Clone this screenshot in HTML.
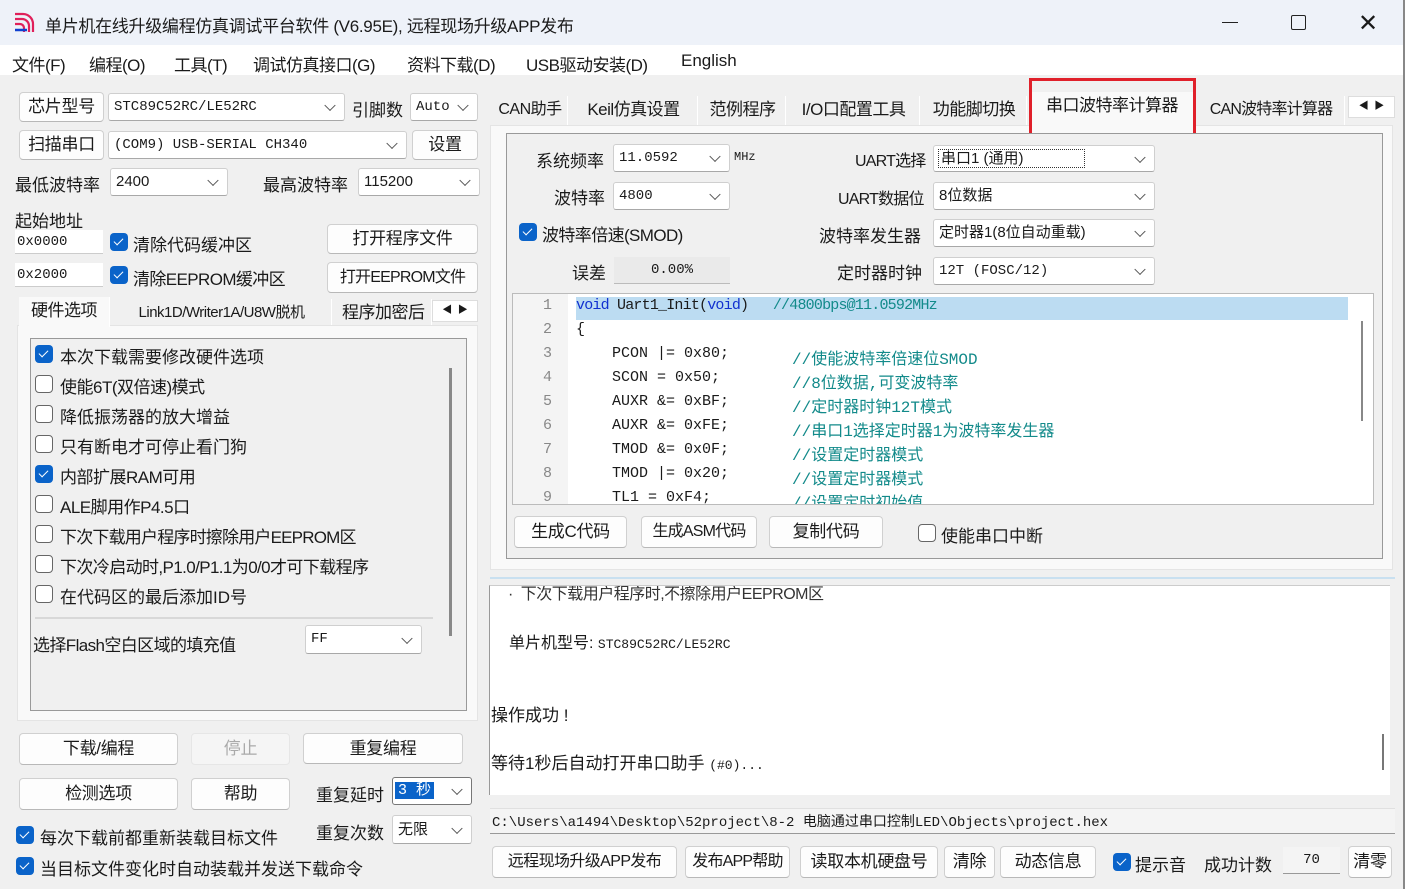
<!DOCTYPE html><html><head><meta charset="utf-8"><style>
*{box-sizing:border-box;margin:0;padding:0}
body{width:1405px;height:889px;overflow:hidden;background:#f0f0f0;font-family:"Liberation Sans","Noto Sans CJK SC",sans-serif;font-size:17px;color:#1a1a1a;position:relative}
.a{position:absolute;white-space:nowrap}
.btn{position:absolute;background:#fdfdfd;border:1px solid #d0d0d0;border-bottom-color:#b8b8b8;border-radius:4px;text-align:center;font-size:17px;white-space:nowrap;overflow:hidden;letter-spacing:-0.3px}
.cb{position:absolute;background:#fff;border:1px solid #cfcfcf;border-bottom-color:#a8a8a8;border-radius:3px;font-size:15px;padding-left:5px;font-family:"Liberation Mono","Noto Sans CJK SC",monospace;white-space:nowrap}
.cb:after{content:"";position:absolute;right:10px;top:50%;width:7px;height:7px;border-right:1.3px solid #555;border-bottom:1.3px solid #555;transform:translateY(-70%) rotate(45deg)}
.ck{position:absolute;width:18px;height:18px;border-radius:4px;background:#0a63c9}
.ck:after{content:"";position:absolute;left:6px;top:3px;width:4px;height:8px;border-right:1.5px solid #fff;border-bottom:1.5px solid #fff;transform:rotate(45deg)}
.uk{position:absolute;width:18px;height:18px;border-radius:4px;border:1.3px solid #666;background:#fff}
.tab{position:absolute;font-size:17px;text-align:center;background:#f0f0f0;border-right:1px solid #fff;white-space:nowrap;overflow:hidden;letter-spacing:-0.5px}
.mono{font-family:"Liberation Mono","Noto Sans CJK SC",monospace}
.code div{position:absolute;left:0;height:24px;font-size:15px;font-family:"Liberation Mono","Noto Sans CJK SC",monospace;white-space:nowrap}
.cm{color:#128a8a;font-size:16px!important}
.kw{color:#1030d0}
</style></head><body>
<div class="a" style="left:0;top:0;width:1405px;height:45px;background:#eef2f9"></div>
<svg class="a" style="left:13px;top:11px" width="24" height="24" viewBox="0 0 24 24"><g fill="none" stroke="#e0205a" stroke-width="2.2"><path d="M2 3h8a10 10 0 0 1 10 10v8"/><path d="M2 8h7a7 7 0 0 1 7 7v6"/><path d="M2 13h5a4 4 0 0 1 4 4v4"/></g><path d="M2 19h12" stroke="#1040d0" stroke-width="2.5"/></svg>
<div class="a" style="left:45px;top:12px;font-size:17px;letter-spacing:-0.3px">单片机在线升级编程仿真调试平台软件 (V6.95E), 远程现场升级APP发布</div>
<div class="a" style="left:1222px;top:22px;width:16px;height:1px;background:#222"></div>
<div class="a" style="left:1291px;top:15px;width:15px;height:15px;border:1.3px solid #222;border-radius:2px"></div>
<div class="a" style="left:1358px;top:9px;font-size:24px;font-weight:300">✕</div>
<div class="a" style="left:0;top:45px;width:1405px;height:30px;background:#fff"></div>
<div class="a" style="left:12px;top:51px;font-size:17px;letter-spacing:-0.5px">文件(F)</div>
<div class="a" style="left:89px;top:51px;font-size:17px;letter-spacing:-0.5px">编程(O)</div>
<div class="a" style="left:174px;top:51px;font-size:17px;letter-spacing:-0.5px">工具(T)</div>
<div class="a" style="left:253px;top:51px;font-size:17px;letter-spacing:-0.5px">调试仿真接口(G)</div>
<div class="a" style="left:407px;top:51px;font-size:17px;letter-spacing:-0.5px">资料下载(D)</div>
<div class="a" style="left:526px;top:51px;font-size:17px;letter-spacing:-0.5px">USB驱动安装(D)</div>
<div class="a" style="left:681px;top:51px;font-size:17px">English</div>

<div class="btn" style="left:19px;top:92px;width:85px;height:30px;line-height:28px">芯片型号</div>
<div class="cb" style="left:108px;top:93px;width:237px;height:28px;line-height:26px;font-size:14px">STC89C52RC/LE52RC</div>
<div class="a" style="left:352px;top:96px;font-size:17px">引脚数</div>
<div class="cb" style="left:410px;top:93px;width:68px;height:28px;line-height:26px;font-size:14px">Auto</div>
<div class="btn" style="left:19px;top:130px;width:85px;height:30px;line-height:28px">扫描串口</div>
<div class="cb" style="left:108px;top:131px;width:299px;height:28px;line-height:26px;font-size:14px">(COM9) USB-SERIAL CH340</div>
<div class="btn" style="left:412px;top:130px;width:66px;height:30px;line-height:28px">设置</div>
<div class="a" style="left:15px;top:171px;font-size:17px">最低波特率</div>
<div class="cb" style="left:110px;top:168px;width:118px;height:28px;line-height:26px;font-family:'Liberation Sans'">2400</div>
<div class="a" style="left:263px;top:171px;font-size:17px">最高波特率</div>
<div class="cb" style="left:358px;top:168px;width:122px;height:28px;line-height:26px;font-family:'Liberation Sans'">115200</div>
<div class="a" style="left:15px;top:207px;font-size:17px">起始地址</div>
<div class="a mono" style="left:15px;top:230px;width:88px;height:24px;background:#fff;border-bottom:1px solid #ccc;font-size:14px;line-height:24px;padding-left:2px">0x0000</div>
<div class="ck" style="left:110px;top:233px"></div>
<div class="a" style="left:133px;top:231px;font-size:17px">清除代码缓冲区</div>
<div class="btn" style="left:327px;top:224px;width:151px;height:30px;line-height:28px">打开程序文件</div>
<div class="a mono" style="left:15px;top:263px;width:88px;height:24px;background:#fff;border-bottom:1px solid #ccc;font-size:14px;line-height:24px;padding-left:2px">0x2000</div>
<div class="ck" style="left:110px;top:266px"></div>
<div class="a" style="left:133px;top:265px;font-size:17px;letter-spacing:-0.6px">清除EEPROM缓冲区</div>
<div class="btn" style="left:327px;top:262px;width:151px;height:31px;line-height:29px;font-size:16px;letter-spacing:-0.8px">打开EEPROM文件</div>
<div class="a" style="left:17px;top:325px;width:461px;height:396px;background:#f9f9f9;border:1px solid #e4e4e4"></div>
<div class="tab" style="left:19px;top:297px;width:91px;height:30px;line-height:28px;background:#f9f9f9">硬件选项</div>
<div class="tab" style="left:112px;top:299px;width:220px;height:26px;line-height:28px;font-size:15px">Link1D/Writer1A/U8W脱机</div>
<div class="tab" style="left:334px;top:299px;width:98px;height:26px;line-height:28px;text-align:left;padding-left:8px">程序加密后</div>
<div class="a" style="left:432px;top:300px;width:46px;height:22px;background:#fff;border:1px solid #ddd;font-size:10px;line-height:20px;text-align:center">◀ &nbsp;▶</div>
<div class="a" style="left:30px;top:338px;width:437px;height:373px;border:1.5px solid #999;background:#f0f0f0"></div>
<div class="a" style="left:449px;top:368px;width:3px;height:268px;background:#888"></div>
<div class="ck" style="left:35px;top:345px"></div><div class="a" style="left:60px;top:343px;font-size:17px">本次下载需要修改硬件选项</div>
<div class="uk" style="left:35px;top:375px"></div><div class="a" style="left:60px;top:373px;font-size:17px;letter-spacing:-0.5px">使能6T(双倍速)模式</div>
<div class="uk" style="left:35px;top:405px"></div><div class="a" style="left:60px;top:403px;font-size:17px">降低振荡器的放大增益</div>
<div class="uk" style="left:35px;top:435px"></div><div class="a" style="left:60px;top:433px;font-size:17px">只有断电才可停止看门狗</div>
<div class="ck" style="left:35px;top:465px"></div><div class="a" style="left:60px;top:463px;font-size:17px;letter-spacing:-0.5px">内部扩展RAM可用</div>
<div class="uk" style="left:35px;top:495px"></div><div class="a" style="left:60px;top:493px;font-size:17px;letter-spacing:-0.5px">ALE脚用作P4.5口</div>
<div class="uk" style="left:35px;top:525px"></div><div class="a" style="left:60px;top:523px;font-size:17px;letter-spacing:-0.8px">下次下载用户程序时擦除用户EEPROM区</div>
<div class="uk" style="left:35px;top:555px"></div><div class="a" style="left:60px;top:553px;font-size:17px;letter-spacing:-0.6px">下次冷启动时,P1.0/P1.1为0/0才可下载程序</div>
<div class="uk" style="left:35px;top:585px"></div><div class="a" style="left:60px;top:583px;font-size:17px">在代码区的最后添加ID号</div>
<div class="a" style="left:35px;top:617px;width:398px;height:2px;background:#d8d8d8"></div>
<div class="a" style="left:33px;top:631px;font-size:17px;letter-spacing:-0.6px">选择Flash空白区域的填充值</div>
<div class="cb" style="left:305px;top:625px;width:117px;height:29px;line-height:27px;font-size:14px">FF</div>
<div class="btn" style="left:19px;top:733px;width:159px;height:32px;line-height:30px">下载/编程</div>
<div class="btn" style="left:191px;top:733px;width:99px;height:32px;line-height:30px;color:#aaa;background:#f5f5f5;border-color:#e6e6e6">停止</div>
<div class="btn" style="left:303px;top:733px;width:160px;height:31px;line-height:29px">重复编程</div>
<div class="btn" style="left:19px;top:778px;width:159px;height:32px;line-height:30px">检测选项</div>
<div class="btn" style="left:191px;top:778px;width:99px;height:32px;line-height:30px">帮助</div>
<div class="a" style="left:316px;top:781px;font-size:17px">重复延时</div>
<div class="cb" style="left:392px;top:777px;width:80px;height:28px;line-height:26px;border:1.5px solid #777;padding-left:2px"><span style="background:#0a63c9;color:#fff;padding:0 3px">3 秒</span></div>
<div class="a" style="left:316px;top:819px;font-size:17px">重复次数</div>
<div class="cb" style="left:392px;top:815px;width:80px;height:29px;line-height:27px;font-family:'Liberation Sans','Noto Sans CJK SC'">无限</div>
<div class="ck" style="left:16px;top:826px"></div><div class="a" style="left:40px;top:824px;font-size:17px">每次下载前都重新装载目标文件</div>
<div class="ck" style="left:16px;top:857px"></div><div class="a" style="left:40px;top:855px;font-size:17px">当目标文件变化时自动装载并发送下载命令</div>

<div class="a" style="left:490px;top:125px;width:903px;height:445px;background:#f9f9f9;border:1px solid #e4e4e4"></div>
<div class="tab" style="left:493px;top:96px;width:75px;height:29px;line-height:28px;font-size:16px">CAN助手</div>
<div class="tab" style="left:570px;top:96px;width:128px;height:29px;line-height:28px">Keil仿真设置</div>
<div class="tab" style="left:700px;top:96px;width:86px;height:29px;line-height:28px">范例程序</div>
<div class="tab" style="left:788px;top:96px;width:132px;height:29px;line-height:28px">I/O口配置工具</div>
<div class="tab" style="left:922px;top:96px;width:105px;height:29px;line-height:28px">功能脚切换</div>
<div class="tab" style="left:1031px;top:92px;width:163px;height:34px;line-height:28px;background:#f9f9f9">串口波特率计算器</div>
<div class="a" style="left:1029px;top:78px;width:167px;height:63px;border:3px solid #e0202a"></div>
<div class="tab" style="left:1198px;top:96px;width:147px;height:29px;line-height:28px;font-size:16px;letter-spacing:-0.8px">CAN波特率计算器</div>
<div class="a" style="left:1348px;top:96px;width:47px;height:22px;background:#fff;border:1px solid #ddd;font-size:10px;line-height:20px;text-align:center">◀ &nbsp;▶</div>
<div class="a" style="left:506px;top:133px;width:877px;height:426px;border:1.5px solid #999;background:#f0f0f0"></div>
<div class="a" style="left:536px;top:147px;font-size:17px">系统频率</div>
<div class="cb" style="left:613px;top:144px;width:117px;height:28px;line-height:26px;font-size:14px">11.0592</div>
<div class="a mono" style="left:734px;top:150px;font-size:12px">MHz</div>
<div class="a" style="left:855px;top:147px;font-size:16px;letter-spacing:-0.8px">UART选择</div>
<div class="cb" style="left:933px;top:145px;width:222px;height:27px;line-height:25px;font-family:'Liberation Sans','Noto Sans CJK SC'"><span style="outline:1px dotted #333;padding:0 60px 0 2px">串口1 (通用)</span></div>
<div class="a" style="left:554px;top:184px;font-size:17px">波特率</div>
<div class="cb" style="left:613px;top:182px;width:117px;height:28px;line-height:26px;font-size:14px">4800</div>
<div class="a" style="left:838px;top:185px;font-size:16px;letter-spacing:-0.8px">UART数据位</div>
<div class="cb" style="left:933px;top:182px;width:222px;height:28px;line-height:26px;font-family:'Liberation Sans','Noto Sans CJK SC'">8位数据</div>
<div class="ck" style="left:519px;top:223px"></div><div class="a" style="left:542px;top:221px;font-size:17px;letter-spacing:-0.6px">波特率倍速(SMOD)</div>
<div class="a" style="left:819px;top:222px;font-size:17px">波特率发生器</div>
<div class="cb" style="left:933px;top:219px;width:222px;height:28px;line-height:26px;font-family:'Liberation Sans','Noto Sans CJK SC'">定时器1(8位自动重载)</div>
<div class="a" style="left:572px;top:259px;font-size:17px">误差</div>
<div class="a mono" style="left:614px;top:257px;width:116px;height:27px;background:#eaeaea;border-bottom:1px solid #bbb;font-size:14px;line-height:27px;text-align:center">0.00%</div>
<div class="a" style="left:837px;top:259px;font-size:17px">定时器时钟</div>
<div class="cb" style="left:933px;top:257px;width:222px;height:28px;line-height:26px;font-size:14px">12T (FOSC/12)</div>
<div class="a" style="left:512px;top:293px;width:862px;height:212px;background:#fff;border:1px solid #bbb;overflow:hidden">
<div class="a" style="left:0;top:0;width:55px;height:212px;background:#f4f4f4"></div>
<div class="a" style="left:63px;top:3px;width:772px;height:23px;background:#bcdcf2"></div>
<div class="a" style="left:848px;top:27px;width:2px;height:100px;background:#888"></div>
<div class="code" style="position:absolute;left:0;top:3px;width:860px">
<div style="top:0;left:30px;color:#888">1</div><div style="top:0;left:63px;letter-spacing:-0.8px"><span class="kw">void</span> Uart1_Init(<span class="kw">void</span>)&nbsp;&nbsp;&nbsp;<span class="cm" style="font-size:15px!important">//4800bps@11.0592MHz</span></div>
<div style="top:24px;left:30px;color:#888">2</div><div style="top:24px;left:63px">{</div>
<div style="top:48px;left:30px;color:#888">3</div><div style="top:48px;left:99px">PCON |= 0x80;</div><div class="cm" style="top:48px;left:279px">//使能波特率倍速位SMOD</div>
<div style="top:72px;left:30px;color:#888">4</div><div style="top:72px;left:99px">SCON = 0x50;</div><div class="cm" style="top:72px;left:279px">//8位数据,可变波特率</div>
<div style="top:96px;left:30px;color:#888">5</div><div style="top:96px;left:99px">AUXR &amp;= 0xBF;</div><div class="cm" style="top:96px;left:279px">//定时器时钟12T模式</div>
<div style="top:120px;left:30px;color:#888">6</div><div style="top:120px;left:99px">AUXR &amp;= 0xFE;</div><div class="cm" style="top:120px;left:279px">//串口1选择定时器1为波特率发生器</div>
<div style="top:144px;left:30px;color:#888">7</div><div style="top:144px;left:99px">TMOD &amp;= 0x0F;</div><div class="cm" style="top:144px;left:279px">//设置定时器模式</div>
<div style="top:168px;left:30px;color:#888">8</div><div style="top:168px;left:99px">TMOD |= 0x20;</div><div class="cm" style="top:168px;left:279px">//设置定时器模式</div>
<div style="top:192px;left:30px;color:#888">9</div><div style="top:192px;left:99px">TL1 = 0xF4;</div><div class="cm" style="top:192px;left:279px">//设置定时初始值</div>
</div></div>
<div class="btn" style="left:514px;top:516px;width:113px;height:32px;line-height:30px">生成C代码</div>
<div class="btn" style="left:641px;top:516px;width:116px;height:32px;line-height:30px;font-size:16px;letter-spacing:-0.8px">生成ASM代码</div>
<div class="btn" style="left:769px;top:516px;width:114px;height:32px;line-height:30px">复制代码</div>
<div class="uk" style="left:918px;top:524px"></div><div class="a" style="left:941px;top:522px;font-size:17px">使能串口中断</div>
<div class="a" style="left:490px;top:577px;width:905px;height:2px;background:#c9e0f0"></div>
<div class="a" style="left:489px;top:585px;width:901px;height:210px;background:#fff;border-left:1px solid #999;border-top:1px solid #ccc;overflow:hidden">
<div class="a" style="left:18px;top:-6px;font-size:16px;color:#333;letter-spacing:-0.5px">·&nbsp; 下次下载用户程序时,不擦除用户EEPROM区</div>
<div class="a" style="left:19px;top:43px;font-size:16px">单片机型号: <span class="mono" style="font-size:13px">STC89C52RC/LE52RC</span></div>
<div class="a" style="left:1px;top:115px;font-size:17px">操作成功 !</div>
<div class="a" style="left:1px;top:163px;font-size:17px">等待1秒后自动打开串口助手 <span class="mono" style="font-size:13px">(#0)...</span></div>
<div class="a" style="left:892px;top:148px;width:2px;height:36px;background:#777"></div>
</div>
<div class="a" style="left:490px;top:808px;width:905px;height:26px;background:#f4f4f4;border-bottom:1px solid #999;border-top:1px solid #e0e0e0;padding-left:2px;line-height:24px;font-size:14px"><span class="mono">C:\Users\a1494\Desktop\52project\8-2 电脑通过串口控制LED\Objects\project.hex</span></div>
<div class="btn" style="left:492px;top:846px;width:185px;height:32px;line-height:30px;font-size:16px;letter-spacing:-0.6px">远程现场升级APP发布</div>
<div class="btn" style="left:685px;top:846px;width:105px;height:32px;line-height:30px;font-size:16px;letter-spacing:-0.8px">发布APP帮助</div>
<div class="btn" style="left:800px;top:846px;width:138px;height:32px;line-height:30px">读取本机硬盘号</div>
<div class="btn" style="left:944px;top:846px;width:51px;height:32px;line-height:30px">清除</div>
<div class="btn" style="left:1000px;top:846px;width:96px;height:32px;line-height:30px">动态信息</div>
<div class="ck" style="left:1113px;top:853px"></div><div class="a" style="left:1135px;top:851px;font-size:17px">提示音</div>
<div class="a" style="left:1204px;top:851px;font-size:17px">成功计数</div>
<div class="a mono" style="left:1283px;top:847px;width:57px;height:27px;background:#f4f4f4;border-bottom:1px solid #999;text-align:center;line-height:27px;font-size:14px">70</div>
<div class="btn" style="left:1348px;top:846px;width:44px;height:32px;line-height:30px">清零</div>
<div class="a" style="left:1403px;top:0;width:2px;height:889px;background:#888"></div>
</body></html>
